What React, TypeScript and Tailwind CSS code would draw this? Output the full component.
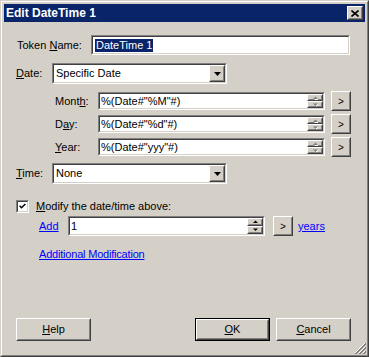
import React from "react";

const font = { fontFamily: '"Liberation Sans", Arial, sans-serif' };

// sunken 3d edge used by edit boxes, combos, checkbox
const Sunken: React.FC<{ className?: string; children?: React.ReactNode }> = ({ className = "", children }) => (
  <div className={`border border-t-[#808080] border-l-[#808080] border-b-white border-r-white ${className}`}>
    <div className="flex h-full items-center border border-t-[#404040] border-l-[#404040] border-b-[#d4d0c8] border-r-[#d4d0c8] bg-white">
      {children}
    </div>
  </div>
);

const Raised: React.FC<{ className?: string; children?: React.ReactNode }> = ({ className = "", children }) => (
  <div className={`border border-t-white border-l-white border-b-[#404040] border-r-[#404040] bg-[#d4d0c8] ${className}`}>
    <div className="flex h-full items-center justify-center border border-t-[#d4d0c8] border-l-[#d4d0c8] border-b-[#808080] border-r-[#808080]">
      {children}
    </div>
  </div>
);

const Arrow: React.FC<{ up?: boolean; disabled?: boolean }> = ({ up, disabled }) => (
  <svg width="5" height="4" viewBox="0 0 5 4" className="block">
    {disabled && <path d={up ? "M1 4 L6 4 L3.5 1.5 Z" : "M1 1 L6 1 L3.5 3.5 Z"} fill="#ffffff" />}
    <path d={up ? "M0 3 L5 3 L2.5 0.5 Z" : "M0 0.5 L5 0.5 L2.5 3 Z"} fill={disabled ? "#808080" : "#000"} />
  </svg>
);

const Spin: React.FC<{ disabled?: boolean }> = ({ disabled }) => (
  <div className="ml-auto flex h-full w-[16px] flex-col">
    <Raised className="h-1/2 w-full">
      <Arrow up disabled={disabled} />
    </Raised>
    <Raised className="h-1/2 w-full">
      <Arrow disabled={disabled} />
    </Raised>
  </div>
);

const Combo: React.FC<{ value: string }> = ({ value }) => (
  <Sunken className="h-[21px] w-[175px]">
    <span className="pl-[2px] text-[11px]">{value}</span>
    <Raised className="mr-0 ml-auto h-[17px] w-[16px]">
      <svg width="7" height="4" viewBox="0 0 7 4">
        <path d="M0 0 L7 0 L3.5 4 Z" fill="#000" />
      </svg>
    </Raised>
  </Sunken>
);

const FormatRow: React.FC<{ label: React.ReactNode; value: string }> = ({ label, value }) => (
  <div className="flex h-[20px] items-center">
    <div className="ml-[51px] w-[43px] text-[11px]">{label}</div>
    <Sunken className="h-[18px] w-[227px]">
      <span className="pl-[1px] text-[11px]">{value}</span>
      <Spin disabled />
    </Sunken>
    <Raised className="ml-[6px] h-[20px] w-[20px]">
      <span className="text-[10px]">&gt;</span>
    </Raised>
  </div>
);

const Btn: React.FC<{ children: React.ReactNode; def?: boolean; className?: string }> = ({ children, def, className = "" }) => (
  <div className={`h-[23px] w-[75px] ${def ? "border border-black" : ""} ${className}`}>
    <Raised className="h-full w-full">
      <span className="text-[11px]">{children}</span>
    </Raised>
  </div>
);

export default function App() {
  return (
    <div className="h-[357px] w-[369px] bg-[#d4d0c8] text-black" style={font}>
      <div className="h-full border border-t-[#d4d0c8] border-l-[#d4d0c8] border-b-[#404040] border-r-[#404040]">
        <div className="relative flex h-full flex-col border border-t-white border-l-white border-b-[#808080] border-r-[#808080] p-[2px]">
          {/* title bar */}
          <div className="flex h-[18px] items-center bg-[#0a246a] pl-[2px] pr-[2px]">
            <span className="text-[12px] font-bold text-white">Edit DateTime 1</span>
            <Raised className="ml-auto h-[14px] w-[16px]">
              <svg width="8" height="7" viewBox="0 0 8 7">
                <path d="M0.5 0.5 L7.5 6.5 M7.5 0.5 L0.5 6.5" stroke="#000" strokeWidth="1.6" />
              </svg>
            </Raised>
          </div>

          <div className="flex flex-1 flex-col">
            {/* token name */}
            <div className="mt-[13px] flex h-[20px] items-center">
              <span className="ml-[13px] w-[74px] text-[11px]">
                Token <u>N</u>ame:
              </span>
              <Sunken className="h-[20px] w-[259px]">
                <span className="ml-[2px] bg-[#0a246a] px-[1px] text-[11px] leading-[13px] text-white">DateTime 1</span>
              </Sunken>
            </div>

            {/* date */}
            <div className="mt-[8px] flex items-center">
              <span className="ml-[12px] w-[36px] text-[11px]">
                <u>D</u>ate:
              </span>
              <Combo value="Specific Date" />
            </div>

            <div className="mt-[7px] flex flex-col gap-[3px]">
              <FormatRow label={<>Mont<u>h</u>:</>} value={'%(Date#"%M"#)'} />
              <FormatRow label={<>D<u>a</u>y:</>} value={'%(Date#"%d"#)'} />
              <FormatRow label={<><u>Y</u>ear:</>} value={'%(Date#"yyy"#)'} />
            </div>

            {/* time */}
            <div className="mt-[6px] flex items-center">
              <span className="ml-[12px] w-[36px] text-[11px]">
                <u>T</u>ime:
              </span>
              <Combo value="None" />
            </div>

            {/* modify */}
            <div className="mt-[16px] flex h-[13px] items-center">
              <Sunken className="ml-[12px] h-[13px] w-[13px]">
                <svg width="11" height="11" viewBox="0 0 11 11">
                  <path d="M2 4.5 L4.3 7 L9 2.5" stroke="#000" strokeWidth="1.8" fill="none" />
                </svg>
              </Sunken>
              <span className="ml-[7px] text-[11px]">
                <u>M</u>odify the date/time above:
              </span>
            </div>

            <div className="mt-[3px] flex h-[20px] items-center">
              <span className="ml-[35px] w-[29px] text-[11px] text-[#0000ff] underline">Add</span>
              <Sunken className="h-[20px] w-[197px]">
                <span className="pl-[1px] text-[11px]">1</span>
                <Spin />
              </Sunken>
              <Raised className="ml-[8px] h-[20px] w-[20px]">
                <span className="text-[10px]">&gt;</span>
              </Raised>
              <span className="ml-[5px] text-[11px] text-[#0000ff] underline">years</span>
            </div>

            <div className="mt-[10px] ml-[35px] text-[11px] tracking-[-0.2px] text-[#0000ff] underline">Additional Modification</div>

            {/* buttons */}
            <div className="mt-auto mb-[12px] flex items-center">
              <Btn className="ml-[12px]">
                <u>H</u>elp
              </Btn>
              <Btn def className="ml-[104px]">
                <u>O</u>K
              </Btn>
              <Btn className="ml-[6px]">
                <u>C</u>ancel
              </Btn>
            </div>
          </div>

          {/* size grip */}
          <svg className="absolute right-[1px] bottom-[1px]" width="12" height="12" viewBox="0 0 12 12">
            <path d="M11 1 L1 11 M11 5 L5 11 M11 9 L9 11" stroke="#ffffff" strokeWidth="1" />
            <path d="M12 1 L1 12 M12 2 L2 12 M12 5 L5 12 M12 6 L6 12 M12 9 L9 12 M12 10 L10 12" stroke="#808080" strokeWidth="1" />
          </svg>
        </div>
      </div>
    </div>
  );
}
